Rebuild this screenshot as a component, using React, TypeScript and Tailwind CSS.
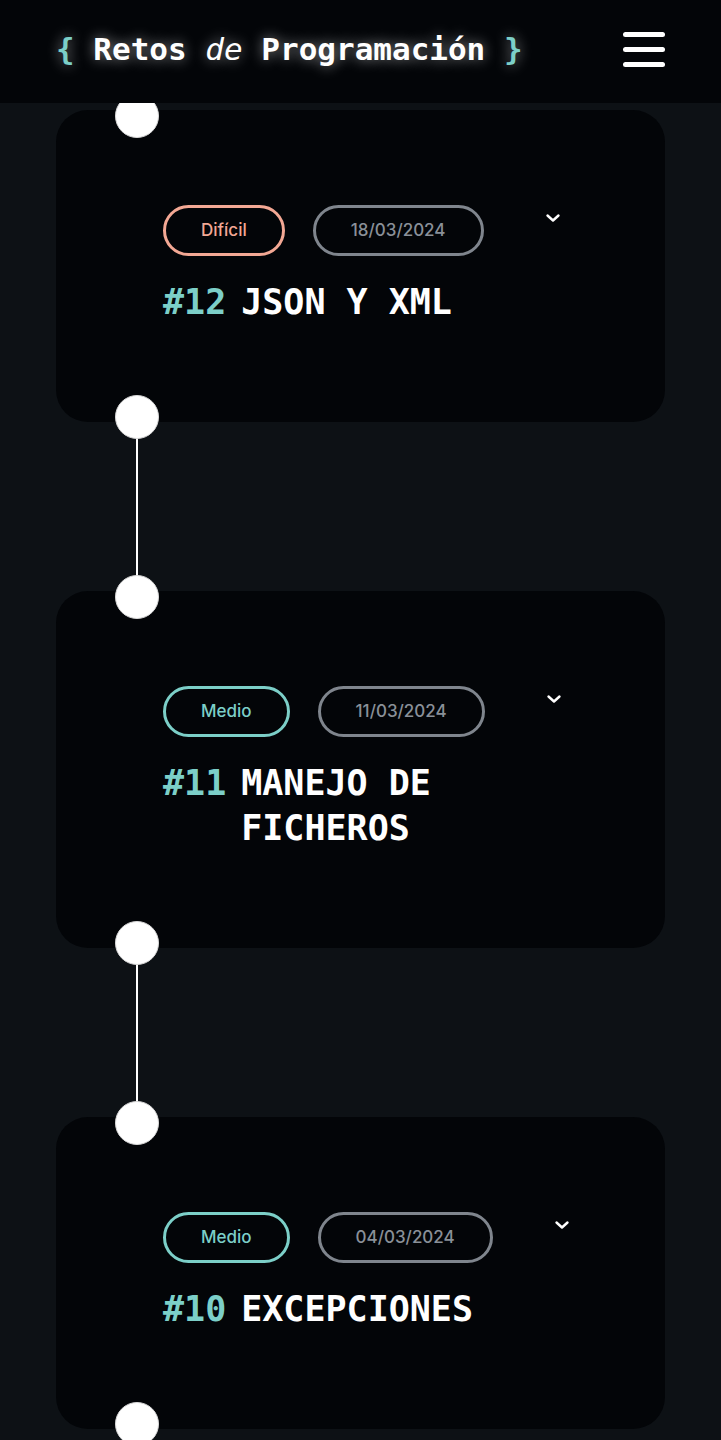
import React from "react";

type Item = {
  num: string;
  title: string;
  level: "Difícil" | "Medio";
  date: string;
};

const items: Item[] = [
  { num: "#12", title: "JSON Y XML", level: "Difícil", date: "18/03/2024" },
  { num: "#11", title: "MANEJO DE FICHEROS", level: "Medio", date: "11/03/2024" },
  { num: "#10", title: "EXCEPCIONES", level: "Medio", date: "04/03/2024" },
];

const mono = { fontFamily: '"DejaVu Sans Mono", "Liberation Mono", monospace' };
const sans = { fontFamily: 'Inter, "Liberation Sans", sans-serif' };

function Chevron() {
  return (
    <svg width="16" height="10" viewBox="0 0 16 10" fill="none">
      <path d="M2.5 2.5 L8 7.5 L13.5 2.5" stroke="white" strokeWidth="2.4" strokeLinecap="round" strokeLinejoin="round" />
    </svg>
  );
}

function Dot({ pos }: { pos: "top" | "bottom" }) {
  return (
    <div
      className={
        "absolute left-[59px] w-[44px] h-[44px] rounded-full bg-white border border-[#d9d9d9] " +
        (pos === "top" ? "top-[-16px]" : "bottom-[-17px]")
      }
    />
  );
}

function Card({ item }: { item: Item }) {
  const hard = item.level === "Difícil";
  return (
    <div className="relative rounded-[32px] bg-[#030508] pl-[107px] pr-[95px] pt-[95px] pb-[97px]">
      <Dot pos="top" />
      <Dot pos="bottom" />
      <div className="flex items-start" style={sans}>
        <div
          className={
            "rounded-full border-[3px] px-[35px] py-[10px] text-[17px] leading-[25px] font-medium " +
            (hard ? "border-[#f3a894] text-[#f3a894]" : "border-[#7ccfc8] text-[#7ccfc8]")
          }
        >
          {item.level}
        </div>
        <div className="ml-[28px] rounded-full border-[3px] border-[#7f858d] px-[35px] py-[10px] text-[17px] leading-[25px] font-medium text-[#8a9098]">
          {item.date}
        </div>
        <div className="ml-[61px] mt-[8px]">
          <Chevron />
        </div>
      </div>
      <div className="mt-[24px] flex gap-[15px] text-[35px] leading-[45px] font-bold" style={mono}>
        <span className="text-[#7ccfc8] shrink-0">{item.num}</span>
        <span className="text-white">{item.title}</span>
      </div>
    </div>
  );
}

export default function App() {
  return (
    <div className="min-h-[1440px] bg-[#0d1115] overflow-hidden">
      <header className="relative z-10 h-[103px] bg-[#030508] flex items-center justify-between px-[56px] pb-[4px]">
        <div
          className="text-[31px] font-bold text-white whitespace-nowrap [text-shadow:0_0_14px_rgba(255,255,255,0.55)]"
          style={mono}
        >
          <span className="text-[#7ccfc8]">{"{"}</span> Retos <em className="italic font-normal">de</em> Programación{" "}
          <span className="text-[#7ccfc8]">{"}"}</span>
        </div>
        <div className="flex flex-col gap-[10px] w-[42px]">
          <div className="h-[5px] rounded-full bg-white" />
          <div className="h-[5px] rounded-full bg-white" />
          <div className="h-[5px] rounded-full bg-white" />
        </div>
      </header>
      <main className="px-[56px] pt-[7px]">
        {items.map((it, i) => (
          <React.Fragment key={it.num}>
            {i > 0 && (
              <div className="h-[169px] pl-[80px]">
                <div className="w-[2px] h-full bg-white" />
              </div>
            )}
            <Card item={it} />
          </React.Fragment>
        ))}
      </main>
    </div>
  );
}
